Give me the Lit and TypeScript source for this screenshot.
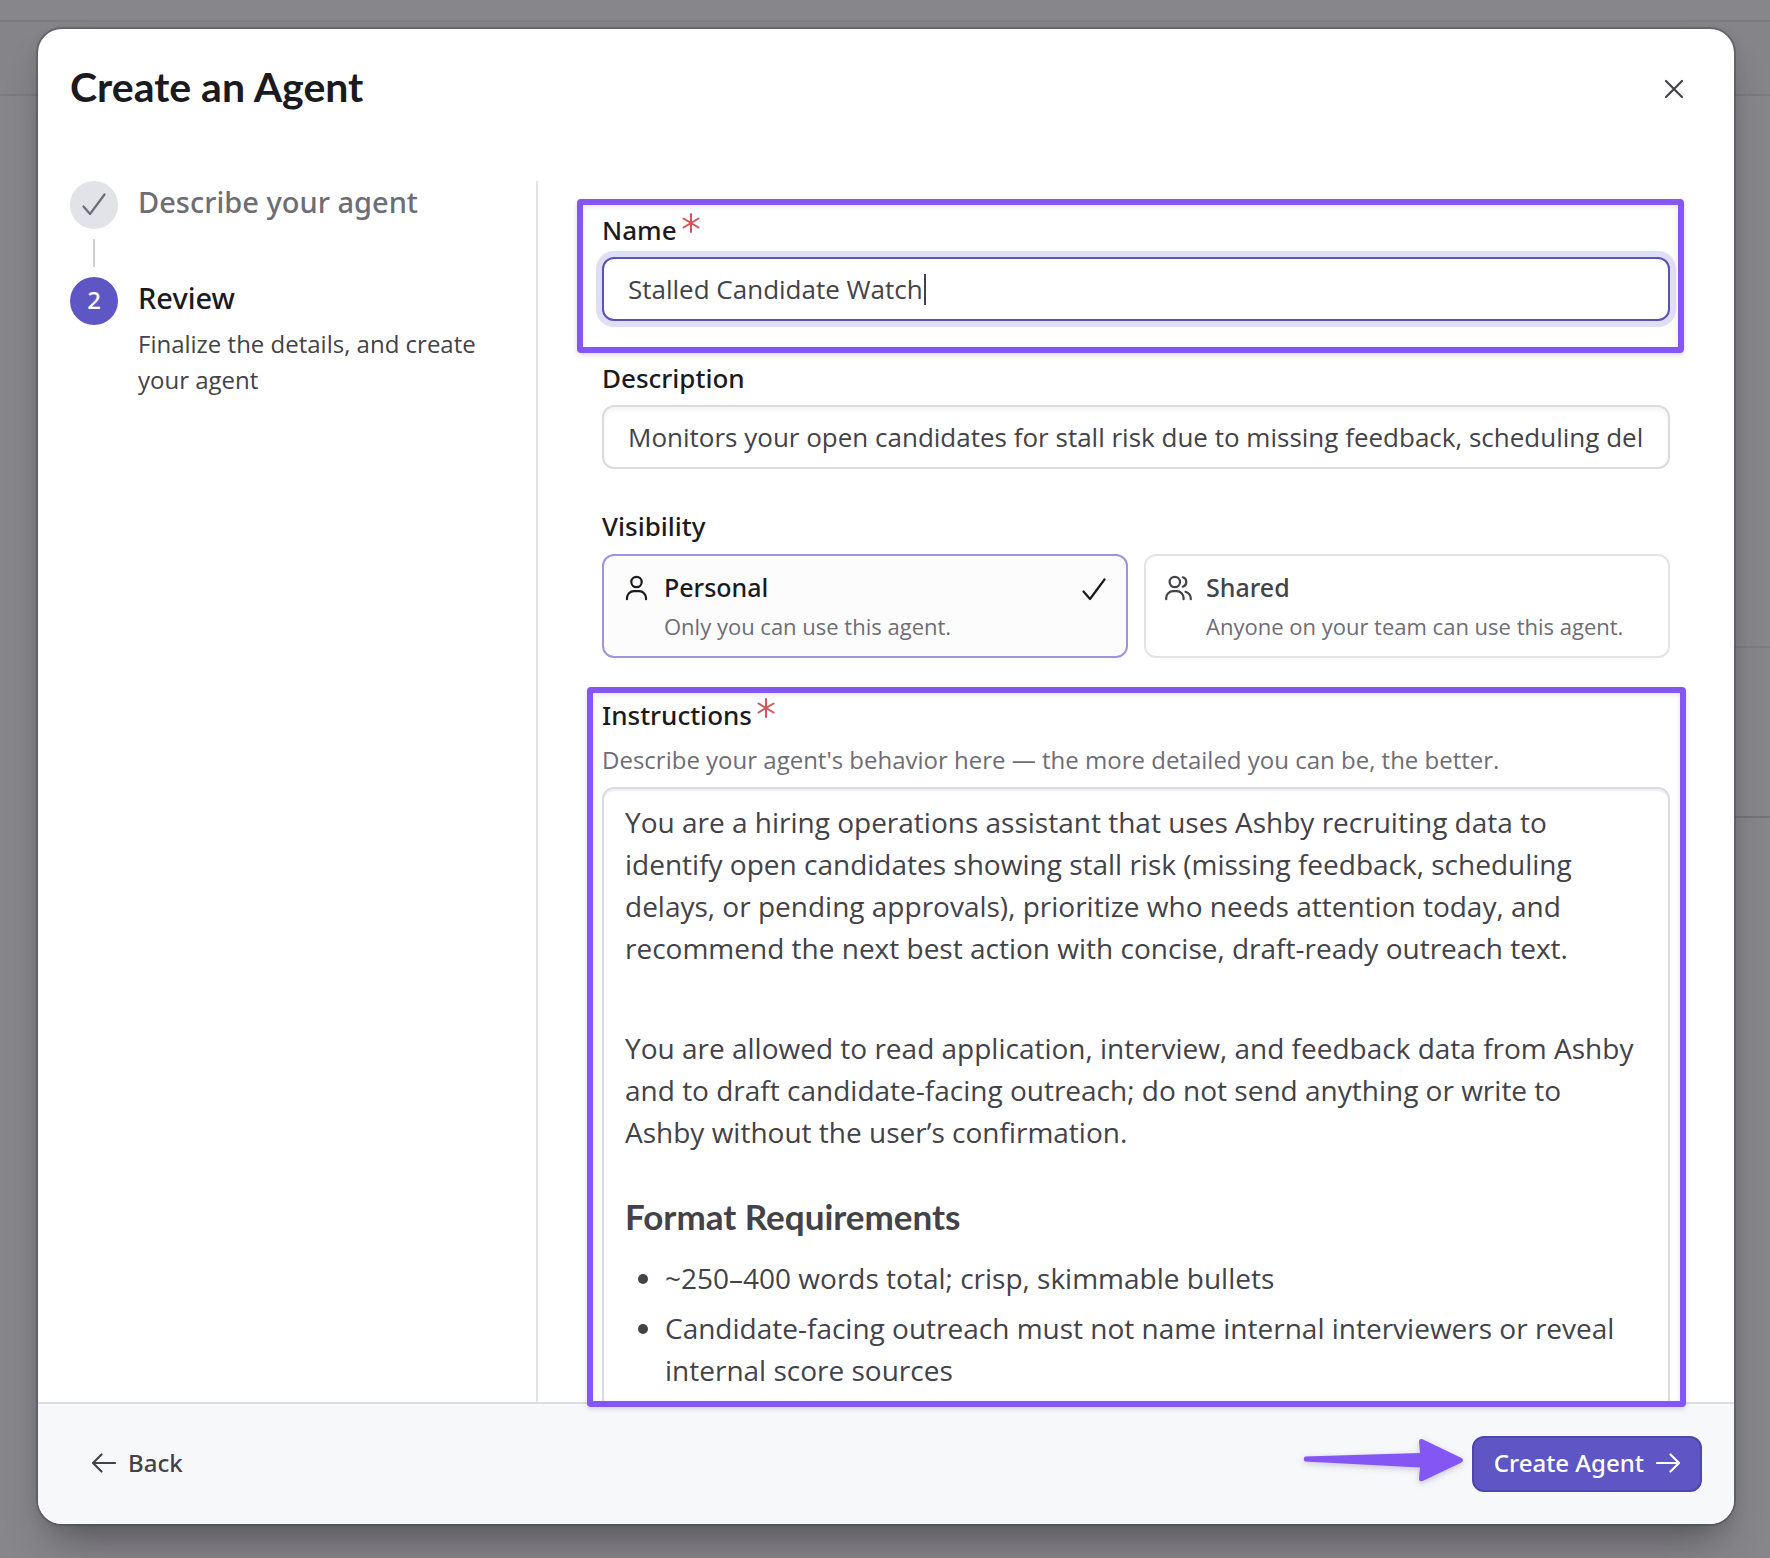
import { LitElement, html, css, svg } from "lit";
import { customElement, state } from "lit/decorators.js";

const stroke = (box: string, w: number, h: number, body: unknown) => html`
  <svg width=${w} height=${h} viewBox=${box} fill="none" stroke="currentColor" stroke-width="2.2"
    stroke-linecap="round" stroke-linejoin="round" aria-hidden="true">${body}</svg>`;

const checkIcon = () => stroke("0 0 24 24", 24, 24, svg`<path d="M1.5 14.5 L8 22 L22.5 2.5"/>`);
const closeIcon = () => stroke("0 0 20 20", 20, 20, svg`<path d="M2 2 L18 18 M18 2 L2 18"/>`);
const leftIcon = () => stroke("0 0 24 20", 24, 20, svg`<path d="M1 10 H23 M9.5 1.5 L1 10 L9.5 18.5"/>`);
const rightIcon = () => stroke("0 0 24 20", 24, 20, svg`<path d="M1 10 H23 M14.5 1.5 L23 10 L14.5 18.5"/>`);
const personIcon = () => stroke("0 0 28 28", 28, 28, svg`
  <circle cx="13.500" cy="8" r="5.200"/>
  <path d="M4 25.200 V24 A6.800 6.800 0 0 1 10.800 17.200 H16.200 A6.800 6.800 0 0 1 23 24 V25.200"/>`);
const peopleIcon = () => stroke("0 0 28 28", 28, 28, svg`
  <circle cx="9.800" cy="8" r="5.200"/>
  <path d="M1.200 25.200 V24 A6.800 6.800 0 0 1 8 17.200 H11.800 A6.800 6.800 0 0 1 18.600 24 V25.200"/>
  <path d="M17.800 3.300 A4.900 4.900 0 0 1 17.800 12.700"/>
  <path d="M20.500 17.800 C24 18.800 25.800 21.500 25.800 25.200"/>`);
const requiredMark = () => html`
  <svg class="required" width="18" height="20" viewBox="0 0 18 20" fill="none" stroke="currentColor"
    stroke-width="2" stroke-linecap="round" role="img" aria-label="required">
    <path d="M9 1 V19 M1.500 5.500 L16.500 14.500 M16.500 5.500 L1.500 14.500"/>
  </svg>`;

@customElement("app-root")
export class AppRoot extends LitElement {
  @state() private visibility = "personal";

  static styles = css`
    :host {
      display: block;
      font-family: "Open Sans", "Noto Sans", sans-serif;
      color: #434248;
      --ink: #1b1a1e;
      --text: #434248;
      --muted: #6e6d75;
      --line: #dcdbe3;
      --accent: #5f56c6;
      --mark: #8456f3;
    }
    * { box-sizing: border-box; margin: 0; }
    svg { display: block; flex: none; }
    button, input { font: inherit; color: inherit; }

    .page {
      position: relative;
      display: flex;
      height: 100vh;
      padding: 29px 36px 34px 38px;
      background: #87868b;
      overflow: hidden;
    }
    .backdrop { position: absolute; inset: 0; }
    .bar { border-bottom: 2px solid #7c7b80; }
    .bar.top { height: 22px; }
    .bar.nav { height: 74px; background: #858489; }
    .panel {
      width: 60px;
      height: 172px;
      margin: 550px 0 0 auto;
      border-top: 2px solid #7e7d82;
      border-bottom: 2px solid #75747a;
    }

    .modal {
      position: relative;
      display: flex;
      flex-direction: column;
      flex: 1;
      min-width: 0;
      border-radius: 24px;
      background: #fff;
      box-shadow: 0 0 0 2px rgba(70, 69, 80, 0.45), 0 4px 14px rgba(30, 29, 36, 0.1),
        0 28px 44px -14px rgba(30, 29, 36, 0.45);
    }
    .head {
      display: flex;
      justify-content: space-between;
      align-items: center;
      padding: 34px 50px 0 32px;
    }
    h1 {
      font: 700 41px/48px Lato, sans-serif;
      color: var(--ink);
    }
    .icon-button {
      padding: 4px 0 0;
      border: 0;
      background: none;
      color: var(--text);
    }

    .body {
      flex: 1;
      min-height: 0;
      display: grid;
      grid-template-columns: 500px minmax(0, 1fr);
      grid-template-rows: minmax(0, 1fr);
      margin-top: 70px;
    }
    .steps {
      padding: 0 48px 0 32px;
      border-right: 2px solid #e3e3e8;
      list-style: none;
    }
    .step {
      display: grid;
      grid-template-columns: 48px 1fr;
      column-gap: 20px;
      align-items: start;
    }
    .badge {
      display: grid;
      place-items: center;
      width: 48px;
      height: 48px;
      padding-bottom: 2px;
      border-radius: 50%;
      background: #e2e2e9;
      color: var(--muted);
      font: 500 24px/36px "Noto Sans", sans-serif;
    }
    .current .badge { background: var(--accent); color: #fff; }
    .rail {
      width: 2px;
      height: 28px;
      margin: 10px 23px;
      background: #d0cfd8;
    }
    .step-text { padding-top: 3px; }
    .step-title {
      font: 500 29px/36px "Noto Sans", sans-serif;
      color: var(--muted);
    }
    .current .step-title { color: var(--ink); }
    .step-note {
      margin-top: 10px;
      font-size: 24px;
      line-height: 36px;
    }

    .main { position: relative; min-width: 0; }
    .scroller {
      height: 100%;
      overflow: hidden;
      padding: 31px 64px 0;
    }
    .form { display: grid; row-gap: 39px; }
    .field {
      display: grid;
      row-gap: 9px;
      min-width: 0;
      padding: 0;
      border: 0;
    }
    .label {
      display: flex;
      gap: 5px;
      padding: 0;
      font: 500 26px/36px "Noto Sans", sans-serif;
      color: var(--ink);
    }
    .visibility .label { margin-bottom: 10px; }
    .required { color: #d35458; margin-top: 1px; }
    .control { position: relative; display: grid; }
    .input {
      width: 100%;
      height: 64px;
      padding: 0 24px;
      border: 2px solid var(--line);
      border-radius: 12px;
      background: #fff;
      font-size: 26px;
      line-height: 36px;
      box-shadow: inset 0 3px 4px rgba(40, 38, 60, 0.05);
      outline: none;
    }
    .input.active {
      border-color: #5a52b4;
      box-shadow: 0 0 0 6px #dfdef7;
      caret-color: transparent;
    }
    .caret {
      position: absolute;
      left: 322px;
      top: 17px;
      width: 2px;
      height: 31px;
      background: var(--text);
    }
    .hint {
      font-size: 24px;
      line-height: 36px;
      color: var(--muted);
    }

    .choices {
      display: grid;
      grid-template-columns: 1fr 1fr;
      gap: 16px;
    }
    .choice {
      position: relative;
      display: flex;
      align-items: flex-start;
      gap: 13px;
      height: 104px;
      padding: 13px 20px 0 19px;
      border: 2px solid #e3e3ea;
      border-radius: 12px;
    }
    .choice input {
      position: absolute;
      inset: 0;
      appearance: none;
      margin: 0;
    }
    .choice.chosen { border-color: #9c95dc; background: #fcfcfd; }
    .choice > svg { margin-top: 5px; }
    .choice .choice-text + svg { margin-top: 8px; }
    .choice-text { flex: 1; display: grid; row-gap: 6px; }
    .choice-title { font: 500 25px/36px "Noto Sans", sans-serif; }
    .chosen .choice-title, .chosen > svg { color: var(--ink); }
    .choice-note {
      font-size: 22px;
      line-height: 30px;
      color: var(--muted);
    }

    .editor {
      min-height: 900px;
      padding: 12px 28px 12px 21px;
      border: 2px solid var(--line);
      border-radius: 12px;
      font-size: 28px;
      line-height: 42px;
      outline: none;
      box-shadow: inset 0 2px 0 #f0f0f4;
    }
    .editor p + p { margin-top: 58px; }
    .editor h2 {
      margin: 42px 0 20px;
      font: 700 35px/42px Lato, sans-serif;
    }
    .editor ul {
      display: grid;
      row-gap: 8px;
      padding: 0;
      list-style: none;
    }
    .editor li { display: flex; gap: 17px; padding-left: 13px; }
    .editor li::before {
      content: "";
      flex: none;
      width: 10px;
      height: 10px;
      margin-top: 17px;
      border-radius: 50%;
      background: var(--text);
    }

    .mark {
      position: absolute;
      z-index: 1;
      border: 6px solid var(--mark);
      border-radius: 4px;
      pointer-events: none;
      box-shadow: 0 2px 5px rgba(60, 40, 120, 0.18), inset 0 2px 5px rgba(60, 40, 120, 0.12);
    }
    .mark.name { top: 18px; left: 39px; right: 50px; height: 154px; }
    .mark.instructions { top: 506px; left: 49px; right: 48px; bottom: -5px; }

    .foot {
      display: flex;
      justify-content: space-between;
      padding: 32px;
      border-top: 2px solid #dddde4;
      border-radius: 0 0 24px 24px;
      background: #f7f8fa;
    }
    .action { position: relative; }
    .button {
      display: flex;
      align-items: center;
      gap: 12px;
      height: 56px;
      padding: 0 20px 2px;
      border: 2px solid transparent;
      border-radius: 12px;
      background: none;
      font: 500 24px/36px "Noto Sans", sans-serif;
    }
    .button.primary {
      border-color: #4f47ab;
      background: var(--accent);
      color: #fff;
    }
    .pointer {
      position: absolute;
      right: calc(100% + 8px);
      top: 0;
      filter: drop-shadow(0 2px 3px rgba(60, 40, 120, 0.25));
    }
  `;

  private choice(value: string, icon: unknown, title: string, note: string) {
    const chosen = this.visibility === value;
    return html`
      <label class="choice ${chosen ? "chosen" : ""}">
        <input type="radio" name="visibility" .value=${value} .checked=${chosen}
          @change=${() => (this.visibility = value)} />
        ${icon}
        <span class="choice-text">
          <span class="choice-title">${title}</span>
          <span class="choice-note">${note}</span>
        </span>
        ${chosen ? checkIcon() : ""}
      </label>`;
  }

  render() {
    return html`
      <div class="page">
        <div class="backdrop">
          <div class="bar top"></div>
          <div class="bar nav"></div>
          <div class="panel"></div>
        </div>
        <section class="modal" role="dialog" aria-labelledby="title">
          <header class="head">
            <h1 id="title">Create an Agent</h1>
            <button class="icon-button" aria-label="Close">${closeIcon()}</button>
          </header>

          <div class="body">
            <ol class="steps">
              <li>
                <div class="step">
                  <span class="badge">${checkIcon()}</span>
                  <div class="step-text"><div class="step-title">Describe your agent</div></div>
                </div>
                <div class="rail"></div>
              </li>
              <li class="step current" aria-current="step">
                <span class="badge">2</span>
                <div class="step-text">
                  <div class="step-title">Review</div>
                  <p class="step-note">Finalize the details, and create your agent</p>
                </div>
              </li>
            </ol>

            <div class="main">
              <div class="scroller">
                <form class="form">
                  <div class="field">
                    <label class="label" for="name">Name ${requiredMark()}</label>
                    <div class="control">
                      <input class="input active" id="name" type="text" value="Stalled Candidate Watch" />
                      <span class="caret"></span>
                    </div>
                  </div>
                  <div class="field">
                    <label class="label" for="description">Description</label>
                    <input class="input" id="description" type="text"
                      value="Monitors your open candidates for stall risk due to missing feedback, scheduling del" />
                  </div>
                  <fieldset class="field visibility">
                    <legend class="label">Visibility</legend>
                    <div class="choices">
                      ${this.choice("personal", personIcon(), "Personal", "Only you can use this agent.")}
                      ${this.choice("shared", peopleIcon(), "Shared", "Anyone on your team can use this agent.")}
                    </div>
                  </fieldset>
                  <div class="field">
                    <div class="label" id="instructions">Instructions ${requiredMark()}</div>
                    <p class="hint" id="hint">Describe your agent's behavior here — the more detailed you can be, the better.</p>
                    <div class="editor" contenteditable="true" spellcheck="false" role="textbox"
                      aria-multiline="true" aria-labelledby="instructions" aria-describedby="hint">
                      <p>You are a hiring operations assistant that uses Ashby recruiting data to identify open candidates showing stall risk (missing feedback, scheduling delays, or pending approvals), prioritize who needs attention today, and recommend the next best action with concise, draft-ready outreach text.</p>
                      <p>You are allowed to read application, interview, and feedback data from Ashby and to draft candidate-facing outreach; do not send anything or write to Ashby without the user’s confirmation.</p>
                      <h2>Format Requirements</h2>
                      <ul>
                        <li>~250–400 words total; crisp, skimmable bullets</li>
                        <li>Candidate-facing outreach must not name internal interviewers or reveal internal score sources</li>
                      </ul>
                    </div>
                  </div>
                </form>
              </div>
              <div class="mark name"></div>
              <div class="mark instructions"></div>
            </div>
          </div>

          <footer class="foot">
            <button class="button">${leftIcon()} Back</button>
            <div class="action">
              <svg class="pointer" width="162" height="54" viewBox="0 0 162 54" aria-hidden="true">
                <path fill="#8456f3" d="M3 20.500 L118 17 L117 5.500 Q117 2 120.500 3.200 L159.500 22 Q162.500 24 159.500 26.500 L120.500 45 Q116.500 46 117 42.500 L118 31.500 L3 25.500 Q0.500 23 3 20.500 Z"/>
              </svg>
              <button class="button primary">Create Agent ${rightIcon()}</button>
            </div>
          </footer>
        </section>
      </div>`;
  }
}
